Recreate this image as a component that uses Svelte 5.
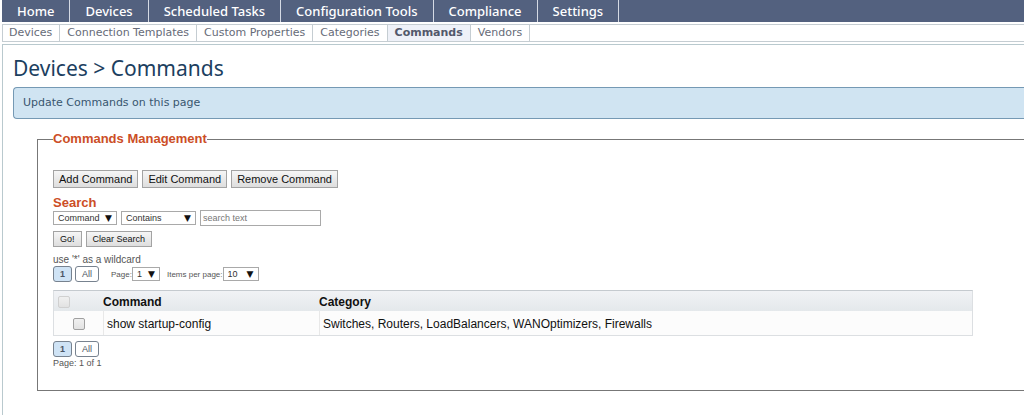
<script lang="ts">
	const sections = ['Home', 'Devices', 'Scheduled Tasks', 'Configuration Tools', 'Compliance', 'Settings'];
	const pages = ['Devices', 'Connection Templates', 'Custom Properties', 'Categories', 'Commands', 'Vendors'];
	const current = 'Commands';

	const commands = [
		{
			name: 'show startup-config',
			categories: ['Switches', 'Routers', 'LoadBalancers', 'WANOptimizers', 'Firewalls']
		}
	];

	let selected: boolean[] = $state(commands.map(() => false));
	let search = $state('');
</script>

{#snippet pager()}
	<button type="button" class="page active">1</button>
	<button type="button" class="page">All</button>
{/snippet}

<div class="app">
	<nav class="main-nav" aria-label="Sections">
		{#each sections as section}
			<a href="#top">{section}</a>
		{/each}
	</nav>

	<nav class="sub-nav" aria-label="Pages">
		{#each pages as page}
			<a href="#top" class:current={page === current}>{page}</a>
		{/each}
	</nav>

	<main>
		<h1>Devices &gt; Commands</h1>
		<p class="info">Update Commands on this page</p>

		<fieldset>
			<legend>Commands Management</legend>

			<div class="row actions">
				<button type="button">Add Command</button>
				<button type="button">Edit Command</button>
				<button type="button">Remove Command</button>
			</div>

			<h2>Search</h2>
			<div class="row filters">
				<span class="select field">
					<select aria-label="Search field">
						<option>Command</option>
						<option>Category</option>
					</select>
				</span>
				<span class="select operator">
					<select aria-label="Operator">
						<option>Contains</option>
						<option>Equals</option>
					</select>
				</span>
				<input type="text" aria-label="Search text" placeholder="search text" bind:value={search} />
			</div>
			<div class="row small">
				<button type="button">Go!</button>
				<button type="button" onclick={() => (search = '')}>Clear Search</button>
			</div>
			<p class="hint">use '*' as a wildcard</p>

			<div class="row paging">
				{@render pager()}
				<label class="page-number">
					Page:
					<span class="select">
						<select><option>1</option></select>
					</span>
				</label>
				<label class="page-size">
					Items per page:
					<span class="select">
						<select>
							<option>10</option>
							<option>25</option>
							<option>50</option>
						</select>
					</span>
				</label>
			</div>

			<table>
				<thead>
					<tr>
						<th class="check"><input type="checkbox" aria-label="Select all" disabled /></th>
						<th class="name">Command</th>
						<th>Category</th>
					</tr>
				</thead>
				<tbody>
					{#each commands as command, i}
						<tr>
							<td class="check">
								<input type="checkbox" aria-label={command.name} bind:checked={selected[i]} />
							</td>
							<td>{command.name}</td>
							<td>{command.categories.join(', ')}</td>
						</tr>
					{/each}
				</tbody>
			</table>

			<div class="row paging">
				{@render pager()}
			</div>
			<p class="count">Page: 1 of 1</p>
		</fieldset>
	</main>
</div>

<style>
	:global(body) {
		background: #fff;
	}

	.app {
		padding-left: 2px;
		font-family: 'Liberation Sans', Arial, sans-serif;
		color: #555;
	}

	nav {
		display: flex;
	}

	nav a {
		text-decoration: none;
		white-space: nowrap;
	}

	.main-nav {
		background: #53617f;
	}

	.main-nav a {
		padding: 0 15px;
		border-right: 1px solid #d5dae4;
		font: 500 13px/22px 'Noto Sans', 'Open Sans', sans-serif;
		color: #fff;
	}

	.sub-nav {
		margin-top: 2px;
		border: 1px solid #c5cdd2;
		border-right: 0;
	}

	.sub-nav a {
		padding: 0 7px;
		border-right: 1px solid #c5cdd2;
		font: 11px/16px 'DejaVu Sans', Verdana, sans-serif;
		color: #666b78;
	}

	.sub-nav a:first-child {
		padding-left: 6px;
	}

	.sub-nav a.current {
		background: #eef1f8;
		font-weight: bold;
		color: #53586b;
	}

	main {
		margin-top: 2px;
		padding: 11px 0 32px 10px;
		border: 1px solid #b9c9ce;
		border-width: 1px 0 0 1px;
	}

	h1 {
		margin: 0;
		font: 21px/24px 'Noto Sans', Tahoma, sans-serif;
		color: #1c405f;
	}

	.info {
		margin: 7px 0 13px;
		padding: 0 9px;
		border: 1px solid #7599b4;
		border-right: 0;
		border-radius: 4px 0 0 4px;
		background: #d0e4f2;
		font: 11px/30px 'DejaVu Sans', Verdana, sans-serif;
		color: #38566f;
	}

	fieldset {
		min-width: 0;
		margin: 0 0 0 24px;
		padding: 24px 51px 21px 15px;
		border: 1px solid #777;
		border-right: 0;
	}

	legend {
		padding: 0;
	}

	legend,
	h2 {
		margin: 0;
		font-size: 13px;
		font-weight: bold;
		line-height: 14px;
		color: #cc4e26;
	}

	.row {
		display: flex;
		align-items: center;
		gap: 4px;
	}

	button {
		height: 18px;
		padding: 0 5px;
		border: 1px solid #a3a3a3;
		border-radius: 0;
		background: linear-gradient(#f6f6f6, #dedede);
		font: 11px 'Liberation Sans', Arial, sans-serif;
		color: #111;
	}

	.small button {
		height: 16px;
		padding: 0 6px;
		font-size: 9px;
	}

	h2 {
		margin-top: 8px;
	}

	.filters {
		margin-bottom: 5px;
	}

	.select {
		position: relative;
		display: inline-flex;
	}

	.select::after {
		content: '▼';
		position: absolute;
		top: 1px;
		right: 5px;
		font: 9px/13px 'DejaVu Sans', sans-serif;
		color: #111;
		pointer-events: none;
	}

	select {
		appearance: none;
		width: 100%;
		height: 14px;
		padding: 0 4px;
		border: 1px solid #a9a9a9;
		border-radius: 0;
		background: #fff;
		font: 9px 'Liberation Sans', Arial, sans-serif;
		color: #333;
	}

	.field {
		width: 64px;
	}

	.operator {
		width: 75px;
	}

	input[type='text'] {
		box-sizing: border-box;
		width: 121px;
		height: 16px;
		padding: 0 2px;
		border: 1px solid #a9a9a9;
		font: 9px 'Liberation Sans', Arial, sans-serif;
	}

	input::placeholder {
		color: #777;
	}

	.hint,
	.count {
		margin: 0;
		font-size: 9px;
		line-height: 12px;
	}

	.hint {
		margin-top: 7px;
		font-size: 10px;
	}

	.paging {
		gap: 3px;
	}

	.paging .page {
		height: 16px;
		border-color: #77828f;
		border-radius: 3px;
		background: #fff;
		padding: 0 6px;
		font-size: 9px;
		color: #4c5563;
	}

	.paging .page.active {
		background: #cfe3f5;
		font-weight: bold;
	}

	label {
		display: flex;
		align-items: center;
		font-size: 8px;
	}

	.page-number {
		margin-left: 9px;
	}

	.page-number .select {
		width: 28px;
	}

	.page-size {
		margin-left: 4px;
	}

	.page-size .select {
		width: 36px;
	}

	table {
		width: 100%;
		margin: 8px 0 5px;
		border: 1px solid #dcdfe2;
		border-top-color: #c5cacf;
		border-collapse: separate;
		border-spacing: 0;
		background: #fcfcfc;
		font-size: 12px;
		color: #111;
	}

	th {
		height: 19px;
		padding: 1px 0 0;
		background: linear-gradient(#f1f2f5, #e4e8eb);
		line-height: 14px;
		text-align: left;
	}

	td {
		height: 23px;
		padding: 1px 3px 0;
		border-left: 1px solid #e8e8e8;
	}

	.check {
		width: 49px;
		padding: 0;
		border-left: 0;
		text-align: center;
	}

	th.check {
		text-align: left;
	}

	.name {
		width: 216px;
	}

	input[type='checkbox'] {
		appearance: none;
		display: inline-block;
		box-sizing: border-box;
		width: 12px;
		height: 12px;
		margin: 0 4px;
		border: 1px solid #a0a0a0;
		border-radius: 2px;
		background: linear-gradient(#f0f0f0, #e2e2e2);
		vertical-align: middle;
	}

	input[type='checkbox']:checked {
		background: #53617f;
	}

	input[type='checkbox']:disabled {
		border-color: #d0d0d0;
	}
</style>
